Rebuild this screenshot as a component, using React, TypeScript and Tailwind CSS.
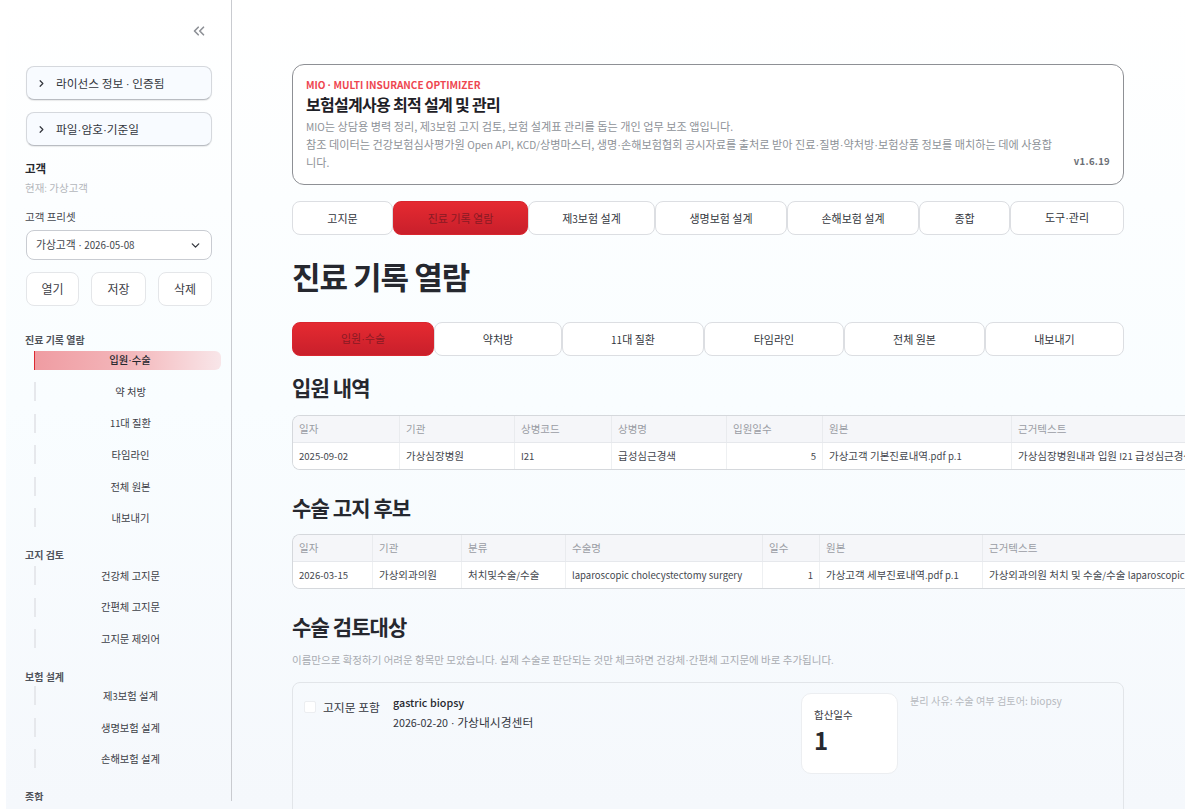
import React from "react";
import { ChevronRight, ChevronDown, ChevronsLeft } from "lucide-react";

const FONT = "font-['Noto_Sans_CJK_KR','Noto_Sans',sans-serif]";

function R({ t }: { t: string }) {
  const parts = t.split(/([A-Za-z0-9.\/:\-]+|·)/);
  return (
    <>
      {parts.map((p, i) =>
        p === "·" ? (
          <span key={i} className="font-['Liberation_Sans',sans-serif]">·</span>
        ) : /^[A-Za-z0-9.\/:\-]+$/.test(p) ? (
          <span key={i} className="text-[0.91em]">{p}</span>
        ) : (
          <React.Fragment key={i}>{p}</React.Fragment>
        )
      )}
    </>
  );
}

const topTabs: [string, string][] = [
  ["고지문", "w-[101px]"],
  ["진료 기록 열람", "w-[135px]"],
  ["제3보험 설계", "w-[127px]"],
  ["생명보험 설계", "w-[132px]"],
  ["손해보험 설계", "w-[132px]"],
  ["종합", "w-[91px]"],
  ["도구·관리", "w-[114px]"],
];
const subTabs: [string, string][] = [
  ["입원·수술", "w-[142px]"],
  ["약처방", "w-[128px]"],
  ["11대 질환", "w-[142px]"],
  ["타임라인", "w-[140px]"],
  ["전체 원본", "w-[141px]"],
  ["내보내기", "w-[139px]"],
];

function Tab({ label, width, active }: { label: string; width: string; active: boolean }) {
  return (
    <div
      className={
        width +
        " h-full flex items-center justify-center rounded-lg text-[11px] border " +
        (active
          ? "bg-gradient-to-b from-[#e52a31] to-[#c91f2b] border-[#d9252e] text-[#8a1a24]"
          : "bg-white border-[#dcdee2] text-[#33363d]")
      }
    >
      <span><R t={label} /></span>
    </div>
  );
}

function NavItem({ label, active }: { label: string; active?: boolean }) {
  return (
    <div className="h-[19px] mb-[12.6px] flex items-stretch">
      <div className={(active ? "w-[1px] bg-[#dc2a32]" : "w-[2px] bg-[#e6e8ec]") + " shrink-0"} />
      <div
        className={
          "flex-1 flex items-center justify-center pl-[4px] rounded-r-md text-[10.3px] " +
          (active
            ? "bg-gradient-to-r from-[#ef9ca2] via-[#f3b6ba] to-[#f8e6e9] text-[#26282e] font-medium"
            : "text-[#3d4047]")
        }
      >
        <span><R t={label} /></span>
      </div>
    </div>
  );
}

function NavGroup({
  title,
  items,
  activeFirst,
  outer,
  inner,
}: {
  title: string;
  items: string[];
  activeFirst?: boolean;
  outer: string;
  inner: string;
}) {
  return (
    <div className={outer}>
      <div className="text-[10px] font-bold text-[#50545c] leading-[16px] h-[16px]">{title}</div>
      <div className={"pl-[9px] w-[196px] " + inner}>
        {items.map((it, i) => (
          <NavItem key={it} label={it} active={activeFirst && i === 0} />
        ))}
      </div>
    </div>
  );
}

function Expander({ label }: { label: string }) {
  return (
    <div className="ml-[1px] h-[34px] w-[186px] flex items-center rounded-lg border border-[#d5d8dd] border-b-[#b9bcc2] bg-[#f8fbff] shadow-[0_1px_1px_rgba(0,0,0,0.08)] pl-[9px] text-[11.7px] text-[#33363d]">
      <ChevronRight size={11} strokeWidth={2.6} className="text-[#33363d] mr-[9px]" />
      <span><R t={label} /></span>
    </div>
  );
}

function DataTable({
  widths,
  headers,
  cells,
  rightIndex,
}: {
  widths: number[];
  headers: string[];
  cells: string[];
  rightIndex: number;
}) {
  return (
    <div className="w-[893px] overflow-hidden rounded-l-lg border-y border-l border-[#d5d8dc]">
      <div className="flex h-[27px] bg-[#f5f6f9] border-b border-[#e6e8ec]">
        {headers.map((h, i) => (
          <div
            key={h}
            style={{ width: widths[i] }}
            className="shrink-0 flex items-center pl-[6px] text-[10.5px] text-[#9a9da4] border-r border-[#e9ebee] last:border-r-0 whitespace-nowrap overflow-hidden"
          >
            {h}
          </div>
        ))}
      </div>
      <div className="flex h-[26px] bg-white">
        {cells.map((c, i) => (
          <div
            key={i}
            style={{ width: widths[i] }}
            className={
              "shrink-0 flex items-center text-[10.5px] text-[#44474e] border-r border-[#eef0f2] last:border-r-0 whitespace-nowrap overflow-hidden " +
              (i === rightIndex ? "justify-end pr-[6px]" : "pl-[6px]")
            }
          >
            <span><R t={c} /></span>
          </div>
        ))}
      </div>
    </div>
  );
}

export default function App() {
  return (
    <div className={FONT + " h-[811px] w-full overflow-hidden bg-white pl-[6px] pr-[2px] pb-[2px]"}>
      <div className="h-full flex overflow-hidden bg-gradient-to-b from-white via-[#f9fdff] to-[#f5f8fc]">
        <aside className="w-[226px] h-[801px] shrink-0 overflow-hidden border-r border-[#c9cbd0] pl-[19px]">
          <div className="h-[66px] flex items-start justify-end pr-[23px] pt-[22px]">
            <ChevronsLeft size={18} strokeWidth={2.2} className="text-[#8d9096]" />
          </div>
          <Expander label="라이선스 정보 · 인증됨" />
          <div className="h-[12px]" />
          <Expander label="파일·암호·기준일" />
          <div className="mt-[14px] text-[11.5px] font-bold text-[#26282e] leading-[17px]">고객</div>
          <div className="mt-[2px] text-[10.5px] text-[#b4b7bc] leading-[17px]"><R t="현재: 가상고객" /></div>
          <div className="mt-[11px] text-[10.5px] text-[#44474e] leading-[17px]">고객 프리셋</div>
          <div className="ml-[1px] mt-[5px] w-[186px] h-[30px] flex items-center justify-between rounded-lg bg-white border border-[#c9ccd2] pl-[9px] pr-[9px] text-[10.8px] text-[#44474e]">
            <span><R t="가상고객 · 2026-05-08" /></span>
            <ChevronDown size={13} strokeWidth={2.4} className="text-[#33363d]" />
          </div>
          <div className="ml-[1px] mt-[12px] w-[186px] h-[34px] flex justify-between text-[12px] text-[#3d4047]">
            {[
              ["열기", "w-[53px]"],
              ["저장", "w-[55px]"],
              ["삭제", "w-[54px]"],
            ].map(([t, w]) => (
              <div key={t} className={w + " flex items-center justify-center rounded-lg bg-white border border-[#e4e6e9]"}>
                {t}
              </div>
            ))}
          </div>
          <div className="h-[26px]" />
          <NavGroup title="진료 기록 열람" outer="mb-[19.5px]" inner="mt-[2.5px]" activeFirst items={["입원·수술", "약 처방", "11대 질환", "타임라인", "전체 원본", "내보내기"]} />
          <NavGroup title="고지 검토" outer="mb-[21px]" inner="mt-[3px]" items={["건강체 고지문", "간편체 고지문", "고지문 제외어"]} />
          <NavGroup title="보험 설계" outer="mb-[21px]" inner="mt-[1px]" items={["제3보험 설계", "생명보험 설계", "손해보험 설계"]} />
          <NavGroup title="종합" outer="mb-[20px]" inner="mt-[2px]" items={[]} />
        </aside>

        <main className="flex-1 min-w-0 h-full overflow-hidden pl-[60px] pt-[64px]">
          <div className="w-[832px]">
            <section className="h-[121px] rounded-xl border border-[#8e9095] bg-white pl-[13px] pr-[13px] pt-[12px] flex">
              <div className="w-[752px] shrink-0">
                <div className="text-[10px] leading-[16px] font-bold text-[#ee4650]">
                  MIO <span className="font-['Liberation_Sans',sans-serif]">·</span> MULTI INSURANCE OPTIMIZER
                </div>
                <div className="text-[16px] leading-[21px] font-bold tracking-[-0.7px] text-[#1e2026]">보험설계사용 최적 설계 및 관리</div>
                <p className="text-[11.15px] leading-[17.5px] text-[#8e9298] mt-[3px]">
                  <R t="MIO는 상담용 병력 정리, 제3보험 고지 검토, 보험 설계표 관리를 돕는 개인 업무 보조 앱입니다." />
                  <br />
                  <R t="참조 데이터는 건강보험심사평가원 Open API, KCD/상병마스터, 생명·손해보험협회 공시자료를 출처로 받아 진료·질병·약처방·보험상품 정보를 매치하는 데에 사용합니다." />
                </p>
              </div>
              <div className="flex-1 flex items-end justify-end pb-[16px] text-[9.5px] font-bold text-[#6b6e75] tracking-[0.3px]">v1.6.19</div>
            </section>

            <div className="mt-[16px] h-[34px] flex">
              {topTabs.map(([t, w]) => (
                <Tab key={t} label={t} width={w} active={t === "진료 기록 열람"} />
              ))}
            </div>

            <h1 className="mt-[20px] text-[31px] leading-[42px] font-bold tracking-[-1px] text-[#26282f]">진료 기록 열람</h1>

            <div className="mt-[25px] h-[34px] flex">
              {subTabs.map(([t, w]) => (
                <Tab key={t} label={t} width={w} active={t === "입원·수술"} />
              ))}
            </div>

            <h2 className="mt-[16px] text-[21px] leading-[30px] font-bold tracking-[-0.9px] text-[#26282f]">입원 내역</h2>
            <div className="mt-[13px]">
              <DataTable
                widths={[107, 115, 97, 115, 96, 189, 174]}
                headers={["일자", "기관", "상병코드", "상병명", "입원일수", "원본", "근거텍스트"]}
                cells={["2025-09-02", "가상심장병원", "I21", "급성심근경색", "5", "가상고객 기본진료내역.pdf p.1", "가상심장병원내과 입원 I21 급성심근경색"]}
                rightIndex={4}
              />
            </div>

            <h2 className="mt-[22px] text-[21px] leading-[30px] font-bold tracking-[-0.9px] text-[#26282f]">수술 고지 후보</h2>
            <div className="mt-[12px]">
              <DataTable
                widths={[80, 89, 104, 197, 57, 163, 203]}
                headers={["일자", "기관", "분류", "수술명", "일수", "원본", "근거텍스트"]}
                cells={["2026-03-15", "가상외과의원", "처치및수술/수술", "laparoscopic cholecystectomy surgery", "1", "가상고객 세부진료내역.pdf p.1", "가상외과의원 처치 및 수술/수술 laparoscopic cholecystectomy"]}
                rightIndex={4}
              />
            </div>

            <h2 className="mt-[22px] text-[21px] leading-[30px] font-bold tracking-[-0.9px] text-[#26282f]">수술 검토대상</h2>
            <p className="mt-[10px] text-[10.5px] leading-[17px] text-[#a9acb2]">
              <R t="이름만으로 확정하기 어려운 항목만 모았습니다. 실제 수술로 판단되는 것만 체크하면 건강체·간편체 고지문에 바로 추가됩니다." />
            </p>

            <section className="mt-[13px] h-[200px] rounded-lg border border-[#e2e5e9] pl-[11px] pr-[12px] pt-[10px] flex">
              <div className="flex items-start pt-[7px] w-[89px] shrink-0">
                <div className="w-[12px] h-[12px] rounded-[2px] bg-white border border-[#eceef1] mr-[7px] mt-[1px]" />
                <span className="text-[11.8px] leading-[14px] text-[#33363d] whitespace-nowrap">고지문 포함</span>
              </div>
              <div className="w-[408px] shrink-0 -mt-[1px]">
                <div className="text-[11.8px] leading-[19px] font-medium text-[#26282e]"><R t="gastric biopsy" /></div>
                <div className="text-[11.8px] leading-[19px] text-[#33363d]"><R t="2026-02-20 · 가상내시경센터" /></div>
              </div>
              <div className="w-[97px] h-[81px] shrink-0 rounded-[10px] bg-white border border-[#eceef1] pl-[12px] pt-[12px]">
                <div className="text-[10.5px] leading-[18px] text-[#3d4047]">합산일수</div>
                <div className="text-[24px] leading-[32px] font-bold text-[#26282f]">1</div>
              </div>
              <div className="ml-[12px] text-[10.2px] leading-[16px] text-[#b7babf]">분리 사유: 수술 여부 검토어: biopsy</div>
            </section>
          </div>
        </main>
      </div>
    </div>
  );
}
